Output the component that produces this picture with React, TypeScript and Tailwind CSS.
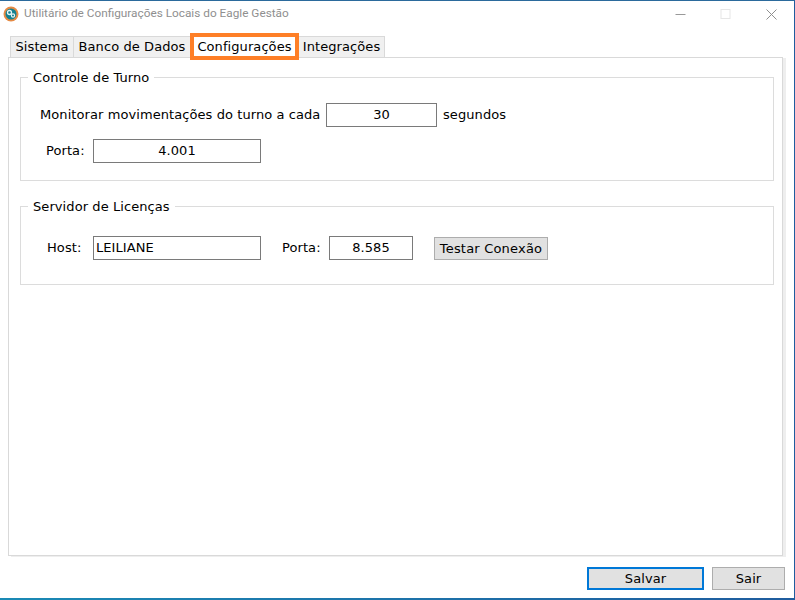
export default function App() {
  return (
    <div className="w-[795px] h-[600px] bg-white flex flex-col overflow-hidden border-t border-t-[#2b6a9c] border-r border-r-[#1f5c9e] text-[13px] tracking-[0.08px] text-black font-['DejaVu_Sans',sans-serif]">
      {/* Title bar */}
      <div className="h-[26px] flex items-center shrink-0">
        <svg width="16" height="16" viewBox="0 0 16 16" className="ml-[3px] mr-[5px]">
          <circle cx="8" cy="8" r="7.5" fill="#e58a45" />
          <circle cx="8" cy="8" r="5.5" fill="#12808f" />
          <circle cx="6.5" cy="6.5" r="2" fill="none" stroke="#e6f3f4" strokeWidth="1.3" />
          <circle cx="10" cy="9.5" r="1.6" fill="none" stroke="#e6f3f4" strokeWidth="1.2" />
        </svg>
        <span className="text-[11.8px] tracking-normal leading-[16px] -mt-[2px] text-[#8f8f8f] font-['Roboto',sans-serif]">Utilitário de Configurações Locais do Eagle Gestão</span>
        <div className="ml-auto flex items-center">
          <svg width="11" height="11" viewBox="0 0 11 11" className="mr-[34px]">
            <path d="M0.5 5.5H10.5" stroke="#999" />
          </svg>
          <svg width="11" height="11" viewBox="0 0 11 11" className="mr-[35px]">
            <rect x="1" y="0.5" width="9" height="9" fill="none" stroke="#e6e6e6" />
          </svg>
          <svg width="11" height="11" viewBox="0 0 11 11" className="mr-[17px]">
            <path d="M0.5 0.5L10.5 10.5M10.5 0.5L0.5 10.5" stroke="#8f8f8f" />
          </svg>
        </div>
      </div>

      {/* Tabs */}
      <div className="flex items-end h-[30px] ml-[10px] shrink-0 relative z-10">
        <div className="h-[21px] w-[64px] flex items-center justify-center bg-[#f0f0f0] border border-b-0 border-[#d9d9d9]">Sistema</div>
        <div className="h-[21px] w-[117px] flex items-center justify-center bg-[#f0f0f0] border border-l-0 border-b-0 border-[#d9d9d9]">Banco de Dados</div>
        <div className="h-[27px] w-[109px] -mb-[3px] -ml-[1px] flex items-center justify-center bg-white border-4 border-[#fe7f27]">Configurações</div>
        <div className="h-[21px] w-[86px] flex items-center justify-center bg-[#f0f0f0] border border-l-0 border-b-0 border-[#d9d9d9]">Integrações</div>
      </div>

      {/* Panel */}
      <div className="h-[499px] mx-[8px] w-[775px] border border-[#d9d9d9] shadow-[3px_1px_0_#eeeeee] px-[11px] shrink-0">
        <fieldset className="border border-[#dcdcdc] mt-[10px] h-[113px] w-[754px]">
          <legend className="ml-[7px] px-[5px] leading-[18px]">
            <span className="block translate-y-px">Controle de Turno</span>
          </legend>
          <div className="flex items-center mt-[17px] h-[24px] pl-[19px]">
            <span className="w-[286px]">Monitorar movimentações do turno a cada</span>
            <div className="w-[111px] h-[24px] border border-[#7a7a7a] flex items-center justify-center">30</div>
            <span className="ml-[6px]">segundos</span>
          </div>
          <div className="flex items-center mt-[12px] h-[24px] pl-[25px]">
            <span className="w-[47px]">Porta:</span>
            <div className="w-[168px] h-[24px] border border-[#7a7a7a] flex items-center justify-center">4.001</div>
          </div>
        </fieldset>
        <fieldset className="border border-[#dcdcdc] mt-[16px] h-[88px] w-[754px]">
          <legend className="ml-[7px] px-[5px] leading-[18px]">
            <span className="block translate-y-px">Servidor de Licenças</span>
          </legend>
          <div className="flex items-center mt-[21px] h-[24px] pl-[26px]">
            <span className="w-[46px]">Host:</span>
            <div className="w-[168px] h-[24px] border border-[#7a7a7a] flex items-center pl-[2px]">LEILIANE</div>
            <span className="ml-[21px] w-[47px]">Porta:</span>
            <div className="w-[84px] h-[24px] border border-[#7a7a7a] flex items-center justify-center">8.585</div>
            <button className="ml-[21px] w-[114px] h-[23px] mt-[1px] bg-[#e1e1e1] border border-[#adadad] flex items-center justify-center tracking-[0.2px]">Testar Conexão</button>
          </div>
        </fieldset>
      </div>

      {/* Footer buttons */}
      <div className="flex items-start pt-[11px] pl-[587px] flex-1">
        <button className="w-[117px] h-[23px] bg-[#e1e1e1] border-2 border-[#0078d7] flex items-center justify-center">Salvar</button>
        <button className="ml-[8px] w-[73px] h-[23px] bg-[#e1e1e1] border border-[#adadad] flex items-center justify-center">Sair</button>
      </div>
      <div className="h-[2px] shrink-0 bg-gradient-to-r from-[#1a8ab5] to-[#1f5c9e]" />
    </div>
  );
}
